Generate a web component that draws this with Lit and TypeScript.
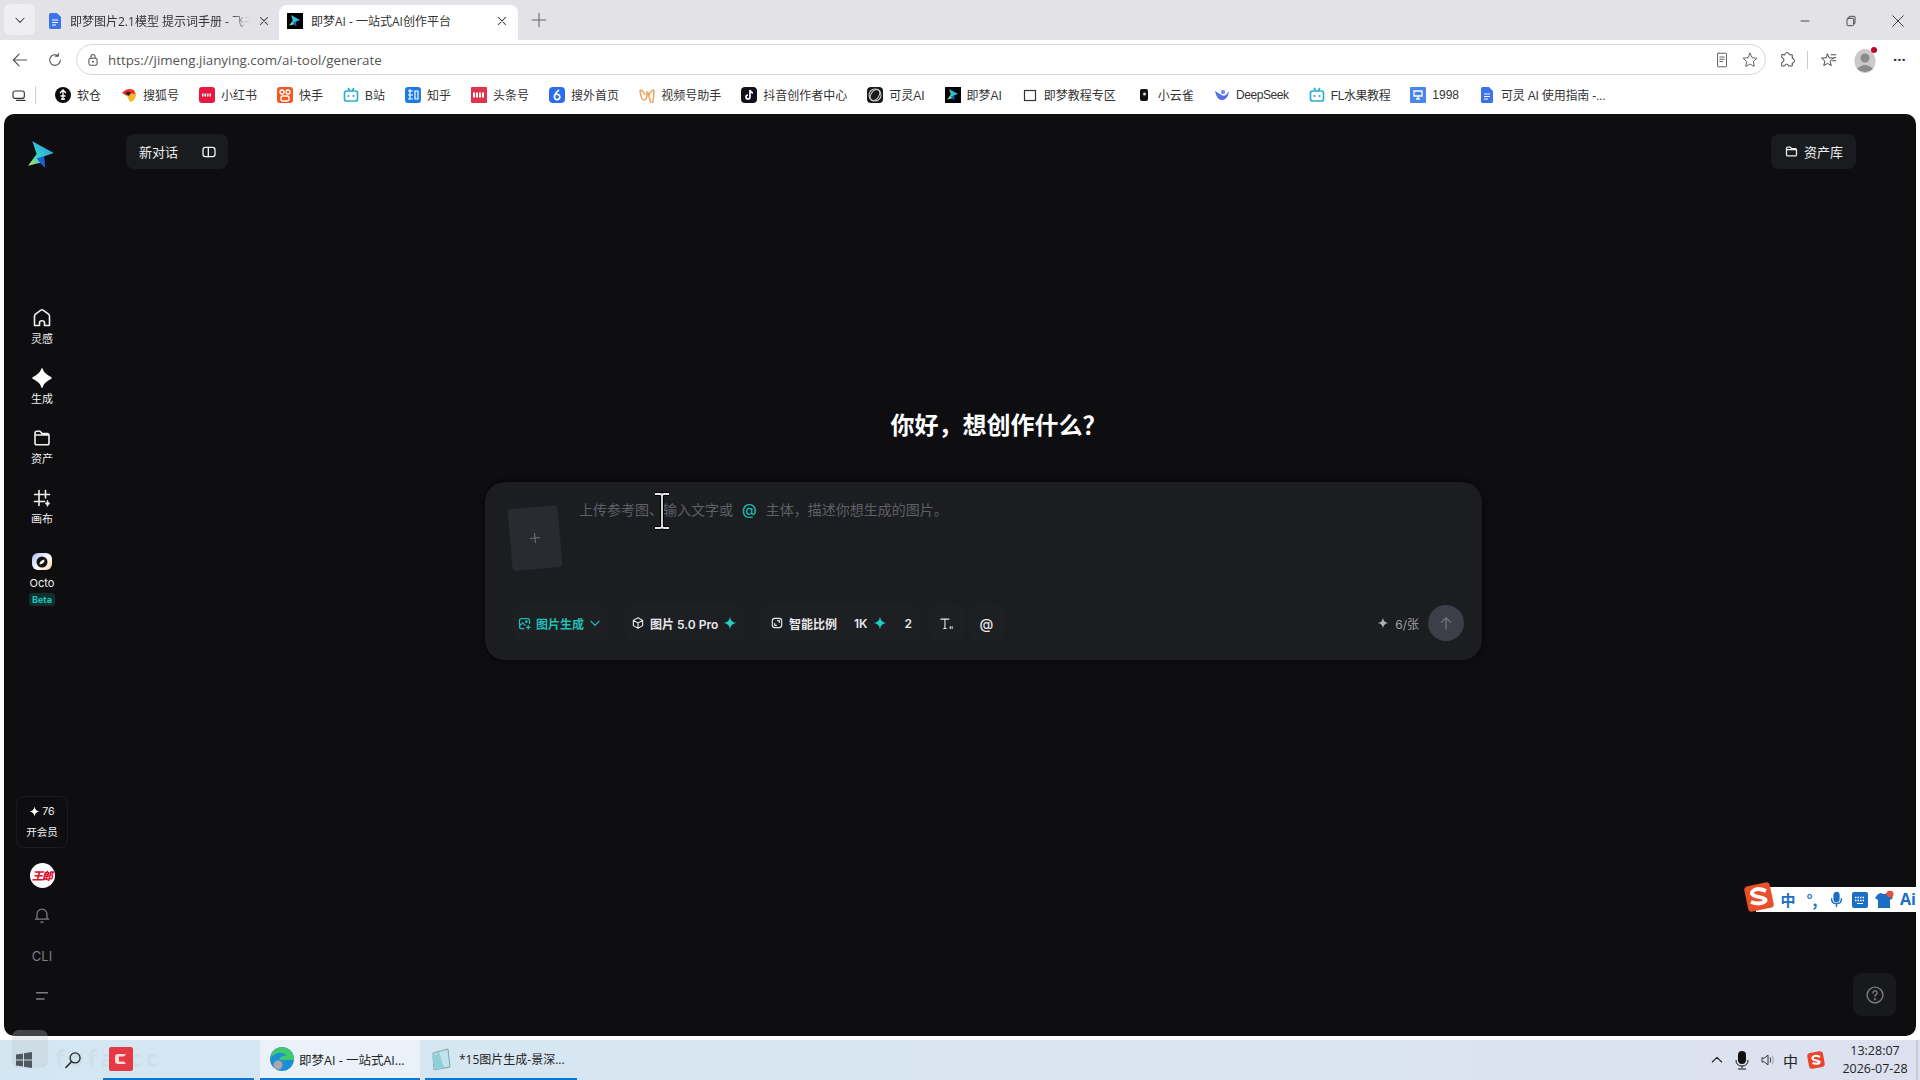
import { LitElement, html, css, svg } from "lit";
import { customElement } from "lit/decorators.js";

const STAR = "M12 1C13 8 16 11 23 12C16 13 13 16 12 23C11 16 8 13 1 12C8 11 11 8 12 1Z";

const i = (size: number, body: unknown, cls = "") =>
  html`<svg class="ic ${cls}" width=${size} height=${size} viewBox="0 0 24 24" fill="none" stroke="currentColor" stroke-width="1.8" stroke-linecap="round" stroke-linejoin="round">${body}</svg>`;

const plane = (id: string) => svg`
  <defs><linearGradient id=${id} x1="0" y1="1" x2="1" y2="0">
    <stop offset="0" stop-color="#d7e04a"/><stop offset=".35" stop-color="#35d6c6"/><stop offset="1" stop-color="#2a8df0"/>
  </linearGradient></defs>
  <path d="M5 2L25 13L16 16L13 22L1 25L9 14Z" fill="url(#${id})" stroke="none"/>
  <path d="M9 18L16 16L17 27L13 23Z" fill="#1d5fd8" stroke="none"/>`;

const logo = (size: number, id: string) =>
  html`<svg class="ic" width=${size} height=${size} viewBox="0 0 28 28">${plane(id)}</svg>`;

const sq = (bg: string, inner: unknown = "", r = 3) =>
  html`<svg class="ic" width="16" height="16" viewBox="0 0 16 16"><rect width="16" height="16" rx=${r} fill=${bg}/>${inner}</svg>`;

const tv = (c: string) => html`<svg class="ic" width="16" height="16" viewBox="0 0 16 16" fill="none" stroke=${c} stroke-width="1.7"><rect x="1.5" y="4" width="13" height="10" rx="2"/><path d="M5 1l2 3M11 1L9 4"/><path d="M5.5 8v2M10.5 8v2"/></svg>`;

const doc = html`<svg class="ic" width="16" height="16" viewBox="0 0 16 16"><path d="M2 1.5Q2 0 3.5 0H10L14 4V14.5Q14 16 12.5 16H3.5Q2 16 2 14.5Z" fill="#3b73ee"/><path d="M5 7h6M5 9.5h6M5 12h4" stroke="#fff" stroke-width="1"/></svg>`;

const bookmarks: [unknown, string, string?][] = [
  [html`<svg class="ic" width="16" height="16" viewBox="0 0 16 16"><circle cx="8" cy="8" r="8" fill="#0b0b0b"/><path d="M5 6l3-3 3 3M8 4v9M5.5 9h5M6 12h4" stroke="#fff" stroke-width="1.3" fill="none"/></svg>`, "软仓"],
  [html`<svg class="ic" width="16" height="16" viewBox="0 0 16 16"><path d="M1 6Q6 0 13 3L15 8Q10 5 6 9Z" fill="#e8382b"/><path d="M6 9Q10 5 15 8Q14 14 9 15Z" fill="#f5b81e"/><path d="M4 6Q7 4 10 5L8 9Z" fill="#222"/></svg>`, "搜狐号"],
  [sq("#e8173f", svg`<path d="M3 8h10" stroke="#fff" stroke-width="3" stroke-dasharray="1.5 1"/>`), "小红书"],
  [sq("#ee5a24", svg`<g fill="none" stroke="#fff" stroke-width="1.3"><circle cx="5" cy="5" r="2"/><circle cx="11" cy="5" r="2"/><rect x="4" y="9" width="8" height="5" rx="1.5"/></g>`), "快手"],
  [tv("#2eb0c9"), "B站"],
  [sq("#1a7ae8", svg`<path d="M3 4h5M5 2v10M3 8h5M3 12h5M10 4h3v8h-3z" stroke="#fff" stroke-width="1.2" fill="none"/>`), "知乎"],
  [sq("#e0324a", svg`<path d="M2 8h12" stroke="#fff" stroke-width="5" stroke-dasharray="2 1"/>`, 1), "头条号"],
  [html`<svg class="ic" width="16" height="16" viewBox="0 0 16 16"><rect width="16" height="16" rx="4" fill="#2a6df0"/><path d="M10 3Q5 7 5.5 10.5a2.7 2.7 0 1 0 1.5-3" stroke="#fff" stroke-width="1.7" fill="none"/></svg>`, "搜外首页"],
  [html`<svg class="ic" width="16" height="16" viewBox="0 0 16 16" fill="none" stroke="#e9a865" stroke-width="1.6"><path d="M1 3Q2 13 5 13T8 7T11 13T15 3"/><path d="M1 3Q4 3 6 8M15 3Q12 3 10 8"/></svg>`, "视频号助手"],
  [sq("#14101a", svg`<path d="M9 3v7a2 2 0 1 1-2-2M9 3q.5 2.5 3 3" stroke="#fff" stroke-width="1.7" fill="none"/>`, 4), "抖音创作者中心"],
  [sq("#17181a", svg`<g fill="none" stroke="#ccc" stroke-width="1.1"><ellipse cx="8" cy="8" rx="4" ry="6.3" transform="rotate(35 8 8)"/><circle cx="8" cy="8" r="6"/></g>`, 4), "可灵AI"],
  [html`<svg class="ic" width="16" height="16" viewBox="0 0 28 28"><rect width="28" height="28" fill="#000"/><g transform="translate(3 2) scale(.8)">${plane("g1")}</g></svg>`, "即梦AI"],
  [html`<svg class="ic" width="16" height="16" viewBox="0 0 16 16"><rect x="2.5" y="3.5" width="11" height="10" fill="none" stroke="#333" stroke-width="1.2"/></svg>`, "即梦教程专区"],
  [html`<svg class="ic" width="16" height="16" viewBox="0 0 16 16"><rect x="4" y="2" width="8" height="12" rx="2" fill="#111"/><circle cx="8.5" cy="7" r="1.5" fill="#ddd"/></svg>`, "小云雀"],
  [html`<svg class="ic" width="16" height="16" viewBox="0 0 16 16"><path d="M1 4Q3 14 9 13Q14 12 15 4L12 8Q9 10 6 7Z" fill="#5570e6"/><circle cx="9" cy="5" r="2.2" fill="#7d8df0"/></svg>`, "DeepSeek", "tight"],
  [tv("#2eb0c9"), "FL水果教程", "tight"],
  [sq("#4a86ea", svg`<path d="M4 4h8v5H4zM6 12h4M8 9v3" stroke="#fff" stroke-width="1.3" fill="none"/>`, 1), "1998"],
  [doc, "可灵 AI 使用指南 -...", "snug"],
];

const navIcons = {
  home: i(24, svg`<path d="M4.5 19.5V10.2Q4.5 9 5.5 8.2L10.6 4.3Q12 3.3 13.4 4.3L18.5 8.2Q19.5 9 19.5 10.2V19.5H14.5V16.5Q14.5 14.8 12 14.8T9.5 16.5V19.5Z" stroke-width="1.6"/>`),
  gen: html`<svg class="ic" width="24" height="24" viewBox="0 0 24 24"><path d="M12 3Q13 8 21 12Q13 16 12 21Q11 16 3 12Q11 8 12 3Z" fill="#fff" stroke="#fff" stroke-width="1.5" stroke-linejoin="round"/></svg>`,
  folder: i(24, svg`<path d="M5 9V7Q5 5.2 6.8 5.2H10L12 7.5H17.2Q19 7.5 19 9.2V17Q19 18.8 17.2 18.8H6.8Q5 18.8 5 17V9H19" stroke-width="1.6"/>`),
  canvas: i(24, svg`<path d="M9 4.5V19.5M4.5 8.5H19.5M4.5 15.5H14.5M15.5 4.5V12" stroke-width="1.6"/><path d="M17.5 14.5Q18 17 20 17.5Q18 18 17.5 20.5Q17 18 15 17.5Q17 17 17.5 14.5Z" fill="currentColor" stroke-width=".6"/>`),
};

@customElement("app-root")
export class AppRoot extends LitElement {
  static styles = css`
    :host { display: flex; flex-direction: column; width: 1920px; height: 1080px; overflow: hidden; background: #fff; position: relative;
      font-family: "Open Sans", "Noto Sans CJK SC", sans-serif; color: #222; }
    * { box-sizing: border-box; }
    .ic { display: block; flex: none; }

    .tabs { height: 40px; flex: none; background: #e3e2e6; display: flex; align-items: flex-end; padding-left: 4px; }
    .tabmenu { width: 31px; height: 31px; margin-bottom: 5px; margin-right: 15px; background: #efeef1; border-radius: 6px; display: flex; align-items: center; justify-content: center; color: #444; }
    .tab { height: 35px; display: flex; align-items: center; font-size: 12px; color: #333; white-space: nowrap; padding-bottom: 4px; }
    .tab.one { width: 232px; gap: 7px; margin-left: -3px; }
    .tab.one .t { width: 180px; overflow: hidden; -webkit-mask-image: linear-gradient(90deg, #000 160px, transparent 180px); mask-image: linear-gradient(90deg, #000 160px, transparent 180px); }
    .tab.active { width: 239px; background: #fff; border-radius: 8px 8px 0 0; padding: 0 9px 4px 8px; gap: 8px; }
    .tab.active .t { flex: 1; }
    .plus { margin-left: 12px; margin-bottom: 11px; color: #666; }
    .winctl { margin-left: auto; display: flex; align-items: center; gap: 30px; padding-right: 13px; margin-bottom: 10px; color: #333; }

    .toolbar { height: 35px; flex: none; background: #fff; display: flex; align-items: flex-end; color: #555; }
    .toolbar .nav { width: 76px; height: 31px; display: flex; align-items: center; padding-left: 10px; gap: 17px; }
    .address { width: 1690px; height: 31px; border: 1px solid #d8d8d8; border-radius: 16px; display: flex; align-items: center; padding-left: 9px; padding-right: 6px; gap: 8px; font-size: 13.35px; color: #555; background: #fff; }
    .address .url { flex: 1; }
    .address .rt { display: flex; gap: 10px; }
    .tools { flex: 1; height: 31px; display: flex; align-items: center; padding-left: 12px; color: #444; }
    .vsep { width: 1px; height: 18px; background: #ccc; margin: 0 12px 0 11px; }
    .avatar { width: 22px; height: 22px; margin-left: 16px; position: relative; }
    .avatar i { position: absolute; right: -1px; top: -2px; width: 6px; height: 6px; border-radius: 50%; background: #c4002a; }
    .dots { margin-left: 17px; font-size: 15px; letter-spacing: 0; line-height: 1; color: #333; font-weight: 700; }

    .bookmarks { height: 39px; flex: none; background: #fff; display: flex; align-items: center; padding-left: 11px; font-family: "Liberation Sans", "Noto Sans CJK SC", sans-serif; font-size: 12px; color: #333; white-space: nowrap; }
    .bm-first { margin-right: 8px; color: #333; }
    .bm-sep { width: 1px; height: 18px; background: #ccc; margin-right: 19px; }
    .bm-list { display: flex; gap: 20px; }
    .bm { display: flex; align-items: center; gap: 6px; }
    .bm .tight { letter-spacing: -.4px; }
    .bm .snug { letter-spacing: -.2px; }

    .panel-wrap { flex: none; height: 926px; background: #fff; padding: 0 4px 4px 4px; }
    .panel { height: 922px; background: #0e0e11; border-radius: 10px; display: flex; color: #fff; font-family: Inter, "Noto Sans CJK SC", sans-serif; position: relative; overflow: hidden; }

    .side { width: 76px; flex: none; display: flex; flex-direction: column; align-items: center; padding-top: 25px; }
    .nav-list { margin-top: 137px; display: flex; flex-direction: column; align-items: center; }
    .nav-item { height: 60px; display: flex; flex-direction: column; align-items: center; font-size: 11px; line-height: 16px; gap: 1px; color: #f0f0f0; }
    .octo { padding-top: 7px; gap: 5px; }
    .octo-ic { width: 20px; height: 20px; border-radius: 6px; background: linear-gradient(135deg, #a9b8f5, #fff 55%, #f3d4a6); display: flex; align-items: center; justify-content: center; }
    .beta { font-size: 9px; font-weight: 700; line-height: 13px; color: #19c8b8; background: #10302f; border-radius: 3px; padding: 0 3px; margin-top: -3px; }
    .side-bottom { margin-top: auto; display: flex; flex-direction: column; align-items: center; padding-bottom: 20px; }
    .vip { width: 52px; height: 52px; border: 1px solid #1c1d21; border-radius: 8px; display: flex; flex-direction: column; align-items: center; justify-content: center; gap: 6px; font-size: 10.5px; line-height: 15px; margin-bottom: 7px; color: #f0f0f0; }
    .vip .n { display: flex; align-items: center; gap: 2px; }
    .row { width: 40px; height: 40px; display: flex; align-items: center; justify-content: center; color: #7d7d82; font-size: 13px; }
    .row.cli { margin-top: 1px; }
    .user { width: 25px; height: 25px; border-radius: 50%; background: #fff; color: #e0102e; font: italic 900 11px/25px "Noto Sans CJK SC", sans-serif; text-align: center; white-space: nowrap; letter-spacing: -1px; }

    .main { flex: 1; display: flex; flex-direction: column; min-width: 0; }
    .head { display: flex; justify-content: space-between; padding: 20px 60px 0 46px; }
    .pill { height: 35px; background: #1a1b1f; border-radius: 8px; display: flex; align-items: center; font-size: 13px; color: #f0f0f0; }
    .pill.new { width: 102px; padding-left: 13px; gap: 23px; }
    .pill.lib { width: 85px; padding-left: 13px; gap: 5px; }
    .center { width: 997px; margin-left: 405px; }
    .greet { margin: 241px 0 40px; padding-left: 30px; text-align: center; font-size: 24px; line-height: 32px; font-weight: 700; color: #fff; }
    .card { height: 178px; background: #1c1d21; border-radius: 20px; box-shadow: 0 0 6px rgba(0,0,0,.7); padding: 18px 18px 19px 25px; display: flex; flex-direction: column; justify-content: space-between; }
    .top { display: flex; gap: 19px; }
    .thumb { width: 50px; height: 62px; margin-top: 7px; background: #2a2b31; border-radius: 3px; transform: rotate(-5deg); display: flex; align-items: center; justify-content: center; color: #7a7b82; }
    .ph { font-size: 14px; line-height: 20px; color: #5f6066; white-space: nowrap; display: flex; gap: 9px; }
    .ph b { color: #19b9ad; font-weight: 500; font-size: 15px; }
    .bar { display: flex; align-items: center; height: 36px; margin-left: 3px; }
    .btn { height: 36px; background: #1e1f23; border-radius: 8px; display: flex; align-items: center; font-size: 12px; font-weight: 600; color: #e8e8ea; white-space: nowrap; }
    .btn.mode { width: 95px; padding-left: 4px; gap: 4px; color: #1dbfb3; margin-right: 17px; }
    .btn.model { width: 120px; padding-left: 6px; gap: 5px; margin-right: 15px; }
    .btn.ratio { width: 160px; padding-left: 10px; gap: 5px; margin-right: 9px; }
    .btn.ratio .k { margin-left: 12px; }
    .btn.ratio .c { margin-left: 13px; }
    .btn.sq { width: 35px; justify-content: center; margin-right: 5px; font-size: 14px; font-weight: 500; }
    .teal { color: #21cfc2; }
    .cost { margin-left: auto; display: flex; align-items: center; gap: 6px; font-size: 12px; color: #a0a0a5; margin-right: 9px; }
    .send { width: 36px; height: 36px; border-radius: 50%; background: #3d3e47; color: #6e6f7a; display: flex; align-items: center; justify-content: center; }

    .help { position: absolute; right: 20px; bottom: 20px; width: 43px; height: 43px; border-radius: 8px; background: #18191c; color: #7d7d82; display: flex; align-items: center; justify-content: center; }

    .cursor { position: absolute; left: 650px; top: 492px; color: #e6e6e6; }
    .ime { position: absolute; left: 1742px; top: 882px; height: 30px; width: 176px; }
    .ime-bar { position: absolute; left: 14px; right: 0; top: 5px; height: 25px; background: #fff; display: grid; grid-template-columns: repeat(6, 24px); justify-items: center; align-items: center; padding-left: 20px; color: #1a6fc4; font: 700 15px/25px "Noto Sans CJK SC", sans-serif; }
    .ime-bar .ai { font: 700 16px/25px "Open Sans", sans-serif; }
    .ime-s { position: absolute; left: 2px; top: 0; }

    .wm-logo { position: absolute; left: 12px; top: 1030px; width: 36px; height: 38px; border-radius: 7px; background: rgba(190,195,200,.3); }
    .taskbar { height: 40px; flex: none; display: flex; align-items: stretch; background: linear-gradient(90deg, #d3e7f2 0%, #d9e6f2 50%, #dde1ef 100%); position: relative; font-size: 12.5px; color: #222; }
    .wm { position: absolute; left: 55px; top: 3px; font: 700 24px/30px "Open Sans", sans-serif; letter-spacing: 4px; color: rgba(190,205,215,.3); white-space: nowrap; }
    .tb-l { width: 103px; display: flex; align-items: center; padding-left: 16px; gap: 31px; position: relative; }
    .tb-app { width: 151px; border-bottom: 2px solid #0a78d4; display: flex; align-items: center; padding-left: 6px; margin-right: 6px; position: relative; }
    .tb-win { width: 160px; display: flex; align-items: center; gap: 5px; padding-left: 10px; border-bottom: 2px solid #0a78d4; white-space: nowrap; position: relative; }
    .tb-win.on { background: #eaf1f9; }
    .tb-win.w2 { width: 152px; margin-left: 5px; padding-left: 5px; gap: 7px; font-size: 12px; }
    .tray { margin-left: auto; display: flex; align-items: center; color: #222; position: relative; }
    .tray .cells { display: flex; align-items: center; gap: 9px; margin-right: 13px; }
    .tray .zh { font-size: 15px; margin-left: -3px; }
    .clock { width: 74px; margin-right: 4px; text-align: center; font-size: 12.5px; line-height: 18px; }
    .edge { width: 2px; align-self: stretch; background: #c5cbd8; margin-right: 2px; }
  `;

  render() {
    const star = (s: number, c = "currentColor") => html`<svg class="ic" width=${s} height=${s} viewBox="0 0 24 24"><path d=${STAR} fill=${c}/></svg>`;
    return html`
      <div class="tabs">
        <div class="tabmenu">${i(14, svg`<path d="M5 9l7 7 7-7"/>`)}</div>
        <div class="tab one">${doc}<span class="t">即梦图片2.1模型 提示词手册 - 飞书</span>${i(14, svg`<path d="M6 6l12 12M18 6L6 18"/>`)}</div>
        <div class="tab active"><svg class="ic" width="16" height="16" viewBox="0 0 28 28"><rect width="28" height="28" fill="#000"/><g transform="translate(3 2) scale(.8)">${plane("g2")}</g></svg><span class="t">即梦AI - 一站式AI创作平台</span>${i(14, svg`<path d="M6 6l12 12M18 6L6 18"/>`)}</div>
        <div class="plus">${i(18, svg`<path d="M12 3v18M3 12h18" stroke-width="1.4"/>`)}</div>
        <div class="winctl">
          ${i(16, svg`<path d="M6 12h12" stroke-width="1.3"/>`)}
          ${i(16, svg`<rect x="6" y="8" width="10" height="11" rx="1.5" stroke-width="1.3"/><path d="M9 8V6q0-1 1-1h7q1 0 1 1v9q0 1-1 1h-1" stroke-width="1.3"/>`)}
          ${i(18, svg`<path d="M5 5l14 14M19 5L5 19" stroke-width="1.2"/>`)}
        </div>
      </div>
      <div class="toolbar">
        <div class="nav">
          ${i(20, svg`<path d="M20 12H4M11 5l-7 7 7 7" stroke-width="1.4"/>`)}
          ${i(16, svg`<path d="M20 12a8 8 0 1 1-3-6.2M17 2v4.2h-4.2" stroke-width="1.6"/>`)}
        </div>
        <div class="address">
          ${i(14, svg`<rect x="5" y="9" width="14" height="12" rx="3"/><path d="M8.5 9V6a3.5 3.5 0 0 1 7 0v3"/><circle cx="12" cy="15" r=".8"/>`)}
          <span class="url">https://jimeng.jianying.com/ai-tool/generate</span>
          <div class="rt">
            ${i(18, svg`<rect x="6" y="3" width="12" height="18" rx="1" stroke-width="1.2"/><path d="M9 8h6M9 11h6M9 14h4" stroke-width="1.2"/>`)}
            ${i(18, svg`<path d="M12 3l2.8 5.9 6.4.8-4.7 4.4 1.2 6.4L12 17.4l-5.7 3.1 1.2-6.4L2.800 9.700l6.400-.8z" stroke-width="1.2"/>`)}
          </div>
        </div>
        <div class="tools">
          ${i(18, svg`<path d="M9 5a3 3 0 0 1 6 0h4v5a3 3 0 0 1 0 6v4h-5a2.500 2.500 0 0 0-5 0H5v-5a3 3 0 0 0 0-6V5z" stroke-width="1.3"/>`)}
          <div class="vsep"></div>
          ${i(18, svg`<path d="M10 4l2 5 6 .5-4.500 4 1.500 6-5-3-5 3 1.500-6-4.500-4 6-.5zM15 5h6M18 9h3M17 13h4" stroke-width="1.3"/>`)}
          <div class="avatar">
            <svg class="ic" width="22" height="24" viewBox="0 0 22 24"><ellipse cx="11" cy="12" rx="10.500" ry="12" fill="#c9c9c9"/><circle cx="11" cy="9" r="4.500" fill="#8b8b8b"/><path d="M3 20q8-8 16 0q-8 6-16 0z" fill="#8b8b8b"/></svg>
            <i></i>
          </div>
          <span class="dots">···</span>
        </div>
      </div>
      <div class="bookmarks">
        <div class="bm-first">${i(16, svg`<rect x="3" y="6" width="17" height="11" rx="3" stroke-width="1.700"/><path d="M8 20h13" stroke-width="1.700"/>`)}</div>
        <div class="bm-sep"></div>
        <div class="bm-list">
          ${bookmarks.map(([ic, t, c]) => html`<div class="bm">${ic}<span class=${c ?? ""}>${t}</span></div>`)}
        </div>
      </div>
      <div class="panel-wrap">
        <div class="panel">
          <div class="side">
            ${logo(30, "g3")}
            <div class="nav-list">
              <div class="nav-item">${navIcons.home}<span>灵感</span></div>
              <div class="nav-item">${navIcons.gen}<span>生成</span></div>
              <div class="nav-item">${navIcons.folder}<span>资产</span></div>
              <div class="nav-item">${navIcons.canvas}<span>画布</span></div>
              <div class="nav-item octo">
                <div class="octo-ic"><svg class="ic" width="14" height="14" viewBox="0 0 14 14"><circle cx="7" cy="7" r="5.500" fill="#111"/><path d="M4.500 9.500Q4.500 5.500 9.500 4.500Q9.500 9 4.500 9.500Z" fill="#fff"/></svg></div>
                <span>Octo</span>
                <span class="beta">Beta</span>
              </div>
            </div>
            <div class="side-bottom">
              <div class="vip">
                <div class="n">${star(11, "#fff")}<span>76</span></div>
                <span>开会员</span>
              </div>
              <div class="row"><div class="user">王郎</div></div>
              <div class="row">${i(20, svg`<path d="M6 17V11a6 6 0 0 1 12 0v6M4 17h16M10.500 20.500h3" stroke-width="1.500"/>`)}</div>
              <div class="row cli">CLI</div>
              <div class="row">${i(20, svg`<path d="M5.500 8h13M5.500 15.500h9" stroke-width="1.800"/>`)}</div>
            </div>
          </div>
          <div class="main">
            <div class="head">
              <div class="pill new"><span>新对话</span>${i(16, svg`<rect x="3" y="5" width="18" height="14" rx="3.500" stroke-width="2"/><path d="M11 5v14" stroke-width="2"/>`)}</div>
              <div class="pill lib">${i(15, svg`<path d="M4 9V7Q4 5 6 5H10L12 7.500H18Q20 7.500 20 9.500V17Q20 19 18 19H6Q4 19 4 17V9H20" stroke-width="2"/>`)}<span>资产库</span></div>
            </div>
            <div class="center">
              <div class="greet">你好，想创作什么？</div>
              <div class="card">
                <div class="top">
                  <div class="thumb">${i(14, svg`<path d="M12 4v16M4 12h16" stroke-width="1.500"/>`)}</div>
                  <div class="ph"><span>上传参考图、输入文字或</span><b>@</b><span>主体，描述你想生成的图片。</span></div>
                </div>
                <div class="bar">
                  <div class="btn mode">
                    ${i(15, svg`<path d="M11 20H7Q4 20 4 17V7Q4 4 7 4H17Q20 4 20 7V12M4 16l5-5 4 4" stroke-width="2"/><circle cx="15" cy="9" r="1.200"/><path d="M18 15v6M15 18h6" stroke-width="2"/>`)}
                    <span>图片生成</span>
                    ${i(14, svg`<path d="M5 9l7 7 7-7" stroke-width="2"/>`)}
                  </div>
                  <div class="btn model">
                    ${i(14, svg`<path d="M12 3l8 4.500v9L12 21l-8-4.500v-9zM4 7.500l8 4.500 8-4.500M12 12v9" stroke-width="1.900"/>`)}
                    <span>图片 5.0 Pro</span>
                    <span class="teal">${star(14)}</span>
                  </div>
                  <div class="btn ratio">
                    ${i(14, svg`<rect x="4" y="4" width="16" height="16" rx="4" stroke-width="2"/><path d="M8 13v3h3M16 11V8h-3" stroke-width="2"/>`)}
                    <span>智能比例</span>
                    <span class="k">1K</span>
                    <span class="teal">${star(14)}</span>
                    <span class="c">2</span>
                  </div>
                  <div class="btn sq">${i(15, svg`<path d="M3 5h13M9.500 5v15M7.500 20h4M18 17v3M21 17v3" stroke-width="1.700"/>`)}</div>
                  <div class="btn sq">@</div>
                  <div class="cost">${star(12, "#b0b0b5")}<span>6/张</span></div>
                  <div class="send">${i(18, svg`<path d="M12 20V5M6 11l6-6 6 6" stroke-width="2"/>`)}</div>
                </div>
              </div>
            </div>
          </div>
          <div class="help">${i(20, svg`<circle cx="12" cy="12" r="9.500" stroke-width="1.700"/><path d="M9.500 9.500a2.500 2.500 0 1 1 3.500 2.300q-1 .5-1 1.700" stroke-width="1.700"/><circle cx="12" cy="17" r=".5"/>`)}</div>
        </div>
      </div>
      <div class="taskbar">
        <div class="wm">fofa cc</div>
        <div class="tb-l">
          <svg class="ic" width="16" height="16" viewBox="0 0 16 16"><path d="M0 2.500L7 1.500V7.500H0zM8 1.300L16 0V7.500H8zM0 8.500H7V14.500L0 13.500zM8 8.500H16V16L8 14.700z" fill="#1f2a33"/></svg>
          ${i(20, svg`<circle cx="14.500" cy="9.500" r="6" stroke-width="1.500"/><path d="M10 14L3.500 21" stroke-width="1.800"/>`)}
        </div>
        <div class="tb-app">
          <svg class="ic" width="24" height="24" viewBox="0 0 24 24"><rect width="24" height="24" rx="2" fill="#e63946"/><path d="M17 7H9Q6 7 6 10V14Q6 17 9 17H17L15 14.500H10V9.500H15Z" fill="#fbdcd5"/></svg>
        </div>
        <div class="tb-win on">
          <svg class="ic" width="24" height="24" viewBox="0 0 24 24"><circle cx="12" cy="12" r="12" fill="#1c8fd4"/><path d="M0 12Q2 1 12 0Q23 1 24 13H9Q11 8 17 9Q13 5 8 6Q2 8 0 12Z" fill="#42c96a"/><circle cx="8" cy="18" r="4.500" fill="#a9a5aa"/></svg>
          <span>即梦AI - 一站式AI...</span>
        </div>
        <div class="tb-win w2">
          <svg class="ic" width="22" height="24" viewBox="0 0 22 24"><path d="M3 6L18 2L20 20L4 23Z" fill="#bfe3e8" stroke="#7fa5ab"/><path d="M2 10L9 5L14 21L5 23Z" fill="#8fd0d8"/></svg>
          <span>*15图片生成-景深...</span>
        </div>
        <div class="tray">
          <div class="cells">
            ${i(16, svg`<path d="M5 15l7-7 7 7" stroke-width="1.600"/>`)}
            <svg class="ic" width="16" height="20" viewBox="0 0 16 20"><rect x="4" y="1" width="8" height="13" rx="4" fill="#111"/><path d="M2 10q0 6 6 6t6-6M8 16v2M4 19h8" stroke="#111" fill="none"/></svg>
            ${i(18, svg`<path d="M4 9.500v5h3l5 4v-13l-5 4zM15 9q1.500 3 0 6" stroke-width="1.200"/><path d="M18 7q2.500 5 0 10" stroke-width="1.200" opacity=".4"/>`)}
            <span class="zh">中</span>
            <svg class="ic" width="18" height="18" viewBox="0 0 18 18"><rect x="1" y="1" width="16" height="16" rx="3" fill="#e8452c" transform="rotate(-10 9 9)"/><path d="M13 6Q8 3.500 6 6T9 9.500T12 12T5.500 12" stroke="#fff" stroke-width="2.200" fill="none"/></svg>
          </div>
          <div class="clock">13:28:07<br/>2026-07-28</div>
          <div class="edge"></div>
        </div>
      </div>
      <div class="wm-logo"></div>
      <svg class="cursor" width="24" height="38" viewBox="0 0 24 38" fill="none"><path d="M5 2H10Q12 2 12 4V34Q12 36 10 36H5M19 2H14Q12 2 12 4V34Q12 36 14 36H19" stroke="#000" stroke-width="4"/><path d="M5 2H10Q12 2 12 4V34Q12 36 10 36H5M19 2H14Q12 2 12 4V34Q12 36 14 36H19" stroke="#e6e6e6" stroke-width="1.800"/></svg>
      <div class="ime">
        <div class="ime-bar">
          <span>中</span>
          <span>°,</span>
          ${i(17, svg`<rect x="8.500" y="2" width="7" height="13" rx="3.500" fill="currentColor"/><path d="M5 11q0 7 7 7t7-7M12 18v4" stroke-width="2"/>`)}
          <svg class="ic" width="16" height="16" viewBox="0 0 16 16"><rect width="16" height="16" rx="2" fill="#1a6fc4"/><path d="M3 5.500h10M3 8.500h10" stroke="#fff" stroke-width="1.500" stroke-dasharray="1.500 1"/><path d="M5 11.500h6" stroke="#fff"/></svg>
          <svg class="ic" width="20" height="18" viewBox="0 0 20 18"><path d="M4 3L7 2Q10 4 13 2L16 3L19 7L16 9V17H4V9L1 7Z" fill="#1a6fc4"/><circle cx="16" cy="3" r="3.500" fill="#e8503a"/></svg>
          <span class="ai">Ai</span>
        </div>
        <svg class="ime-s ic" width="30" height="30" viewBox="0 0 30 30"><rect x="2" y="2" width="26" height="26" rx="4" fill="#e8502c" transform="rotate(-12 15 15)"/><path d="M22 9Q13 5 9 9T15 15T20 20T7 20" stroke="#fff" stroke-width="3.800" fill="none"/></svg>
      </div>
    `;
  }
}
